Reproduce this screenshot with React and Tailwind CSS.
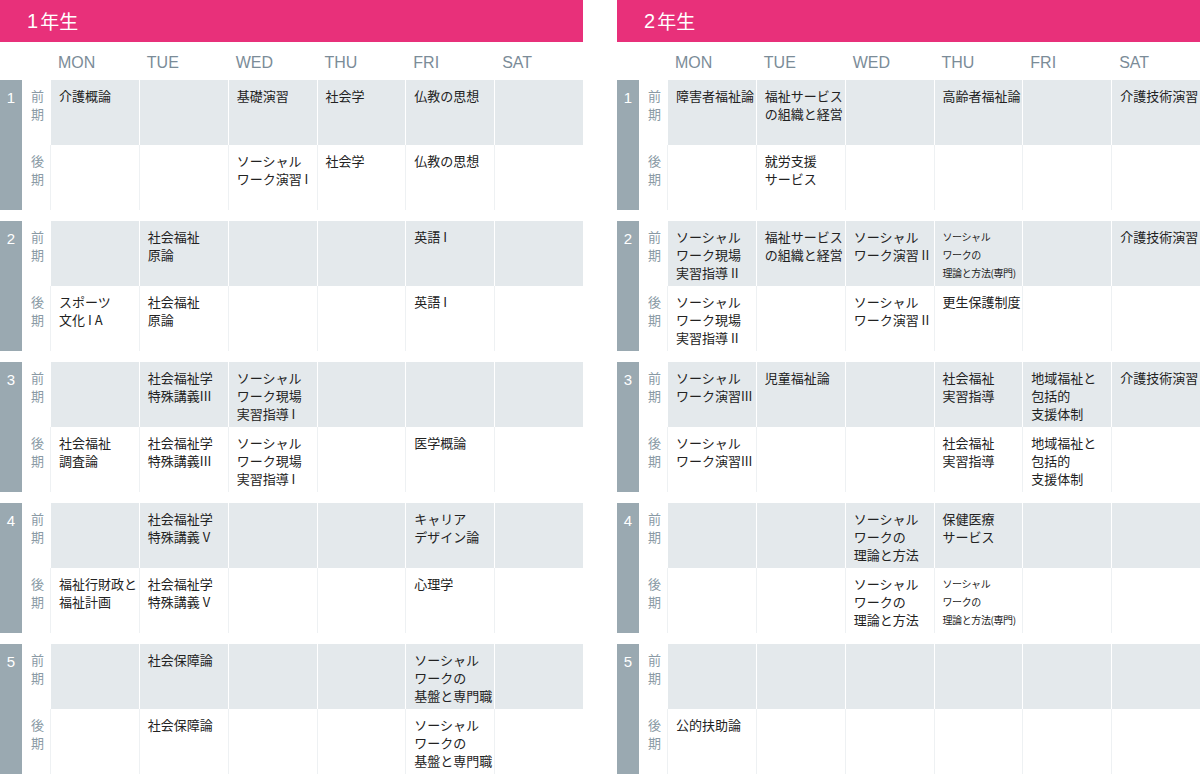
const F = { fontFamily: '"Noto Sans CJK JP","Liberation Sans",sans-serif' };
const DAYS = ["MON", "TUE", "WED", "THU", "FRI", "SAT"];
const S = (t) => ({ small: t });

const Y1 = [
  [["介護概論", "", "基礎演習", "社会学", "仏教の思想", ""], ["", "", "ソーシャル\nワーク演習 I", "社会学", "仏教の思想", ""]],
  [["", "社会福祉\n原論", "", "", "英語 I", ""], ["スポーツ\n文化 I A", "社会福祉\n原論", "", "", "英語 I", ""]],
  [["", "社会福祉学\n特殊講義III", "ソーシャル\nワーク現場\n実習指導 I", "", "", ""], ["社会福祉\n調査論", "社会福祉学\n特殊講義III", "ソーシャル\nワーク現場\n実習指導 I", "", "医学概論", ""]],
  [["", "社会福祉学\n特殊講義 V", "", "", "キャリア\nデザイン論", ""], ["福祉行財政と\n福祉計画", "社会福祉学\n特殊講義 V", "", "", "心理学", ""]],
  [["", "社会保障論", "", "", "ソーシャル\nワークの\n基盤と専門職", ""], ["", "社会保障論", "", "", "ソーシャル\nワークの\n基盤と専門職", ""]],
];
const Y2 = [
  [["障害者福祉論", "福祉サービス\nの組織と経営", "", "高齢者福祉論", "", "介護技術演習"], ["", "就労支援\nサービス", "", "", "", ""]],
  [["ソーシャル\nワーク現場\n実習指導 II", "福祉サービス\nの組織と経営", "ソーシャル\nワーク演習 II", S(["ソーシャル", "ワークの", "理論と方法(専門)"]), "", "介護技術演習"], ["ソーシャル\nワーク現場\n実習指導 II", "", "ソーシャル\nワーク演習 II", "更生保護制度", "", ""]],
  [["ソーシャル\nワーク演習III", "児童福祉論", "", "社会福祉\n実習指導", "地域福祉と\n包括的\n支援体制", "介護技術演習"], ["ソーシャル\nワーク演習III", "", "", "社会福祉\n実習指導", "地域福祉と\n包括的\n支援体制", ""]],
  [["", "", "ソーシャル\nワークの\n理論と方法", "保健医療\nサービス", "", ""], ["", "", "ソーシャル\nワークの\n理論と方法", S(["ソーシャル", "ワークの", "理論と方法(専門)"]), "", ""]],
  [["", "", "", "", "", ""], ["公的扶助論", "", "", "", "", ""]],
];

function Cell({ v, grey }) {
  return (
    <div className={`h-[65px] pl-2 pt-[7px] text-[13px] leading-[18px] text-[#222] whitespace-pre overflow-hidden ${grey ? "bg-[#e4e9ec] border-l border-white" : "bg-white border-l border-[#eef1f3]"}`}>
      {typeof v === "object" ? (
        <div className="text-[10px] leading-[18px] tracking-[-0.04em]">{v.small.map((s, i) => <div key={i}>{s}</div>)}</div>
      ) : v}
    </div>
  );
}

function Panel({ title, data }) {
  return (
    <div className="w-[583px]">
      <div className="h-[42px] bg-[#e8307a] text-white text-[19px] flex items-center pl-[27px]">
        <span style={{ fontFamily: '"Liberation Sans",sans-serif' }} className="text-[20px] mr-[2px]">{title[0]}</span>{title.slice(1)}
      </div>
      <div className="grid grid-cols-[22px_28px_repeat(6,1fr)] h-[38px] items-center">
        <div /><div />
        {DAYS.map((d) => <div key={d} className="pl-2 pt-[4px] text-[16px] text-[#7b8c98]" style={{ fontFamily: '"Liberation Sans",sans-serif' }}>{d}</div>)}
      </div>
      {data.map((p, i) => (
        <div key={i} className="flex mb-[11px]">
          <div className="w-[22px] bg-[#9aa9b1] text-white text-[15px] text-center pt-[7px]" style={{ fontFamily: '"Liberation Sans",sans-serif' }}>{i + 1}</div>
          <div className="flex-1">
            {p.map((row, r) => (
              <div key={r} className="grid grid-cols-[28px_repeat(6,1fr)]">
                <div className="text-[13px] leading-[18px] text-[#8a9aa5] pl-[9px] pt-[7px] bg-white">{r === 0 ? "前" : "後"}<br />期</div>
                {row.map((v, c) => <Cell key={c} v={v} grey={r === 0} />)}
              </div>
            ))}
          </div>
        </div>
      ))}
    </div>
  );
}

export default function App() {
  return (
    <div className="w-[1200px] h-[774px] overflow-hidden bg-white flex justify-between" style={F}>
      <Panel title="1年生" data={Y1} />
      <Panel title="2年生" data={Y2} />
    </div>
  );
}
